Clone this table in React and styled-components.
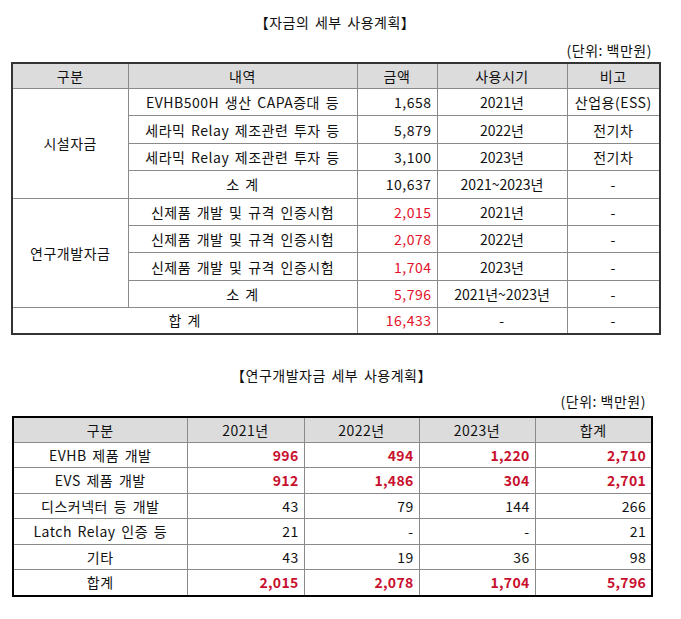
import React from "react";
import styled, { createGlobalStyle } from "styled-components";

const GlobalStyle = createGlobalStyle`
  body {
    margin: 0;
    background: #fff;
    font-family: "Noto Sans CJK KR", "DejaVu Sans", sans-serif;
    color: #111;
  }
`;

const Page = styled.div`
  width: 681px;
  height: 619px;
  padding-top: 12px;
  box-sizing: border-box;
`;

const Section = styled.section`
  margin-left: ${(props) => props.left}px;
  width: ${(props) => props.width}px;
  margin-bottom: ${(props) => props.gap || 0}px;
`;

const Title = styled.div`
  text-align: center;
  font-size: 14px;
  line-height: 20px;
  letter-spacing: 0.5px;
  word-spacing: 2px;
`;

const Unit = styled.div`
  text-align: right;
  font-size: 14px;
  line-height: 20px;
  margin-top: ${(props) => props.top}px;
  margin-bottom: ${(props) => props.bottom}px;
  padding-right: ${(props) => props.right}px;
  letter-spacing: 0.5px;
`;

const Table = styled.table`
  width: 100%;
  border-collapse: collapse;
  table-layout: fixed;
  border: 2px solid ${(props) => props.edge};
  font-size: 14px;
`;

const Th = styled.th`
  background: #dcdcdc;
  font-weight: 400;
  height: ${(props) => props.h}px;
  padding: 0;
  border: 1px solid #8a8a8a;
  text-align: center;
  letter-spacing: 0.5px;
  line-height: 16px;
`;

const Td = styled.td`
  height: ${(props) => props.h}px;
  padding: 0 ${(props) => (props.align === "right" ? "5px" : "2px")} 0 2px;
  border: 1px solid #8a8a8a;
  text-align: ${(props) => props.align || "center"};
  color: ${(props) => (props.red ? props.redColor || "#e3102a" : "#111")};
  font-weight: ${(props) => (props.bold ? 700 : 400)};
  letter-spacing: ${(props) => props.ls ?? 0.5}px;
  word-spacing: 2px;
  line-height: 16px;
  white-space: nowrap;
`;

const facility = [
  ["EVHB500H 생산 CAPA증대 등", "1,658", "2021년", "산업용(ESS)"],
  ["세라믹 Relay 제조관련 투자 등", "5,879", "2022년", "전기차"],
  ["세라믹 Relay 제조관련 투자 등", "3,100", "2023년", "전기차"],
  ["소 계", "10,637", "2021~2023년", "-"],
];

const research = [
  ["신제품 개발 및 규격 인증시험", "2,015", "2021년", "-"],
  ["신제품 개발 및 규격 인증시험", "2,078", "2022년", "-"],
  ["신제품 개발 및 규격 인증시험", "1,704", "2023년", "-"],
  ["소 계", "5,796", "2021년~2023년", "-"],
];

const detail = [
  ["EVHB 제품 개발", "996", "494", "1,220", "2,710", true],
  ["EVS 제품 개발", "912", "1,486", "304", "2,701", true],
  ["디스커넥터 등 개발", "43", "79", "144", "266", false],
  ["Latch Relay 인증 등", "21", "-", "-", "21", false],
  ["기타", "43", "19", "36", "98", false],
  ["합계", "2,015", "2,078", "1,704", "5,796", true],
];

const RH = 26.4;

export default function App() {
  return (
    <Page>
      <GlobalStyle />
      <Section left={11} width={648} gap={30}>
        <Title>【자금의 세부 사용계획】</Title>
        <Unit top={8} bottom={2} right={7}>(단위: 백만원)</Unit>
        <Table edge="#333">
          <colgroup>
            <col style={{ width: 116 }} />
            <col style={{ width: 229 }} />
            <col style={{ width: 80 }} />
            <col style={{ width: 130 }} />
            <col style={{ width: 93 }} />
          </colgroup>
          <thead>
            <tr>
              <Th h={24}>구분</Th>
              <Th h={24}>내역</Th>
              <Th h={24}>금액</Th>
              <Th h={24}>사용시기</Th>
              <Th h={24}>비고</Th>
            </tr>
          </thead>
          <tbody>
            {facility.map((r, i) => (
              <tr key={"f" + i}>
                {i === 0 && <Td rowSpan={4}>시설자금</Td>}
                <Td h={RH}>{r[0]}</Td>
                <Td h={RH} align="right">{r[1]}</Td>
                <Td h={RH} ls={0}>{r[2]}</Td>
                <Td h={RH}>{r[3]}</Td>
              </tr>
            ))}
            {research.map((r, i) => (
              <tr key={"r" + i}>
                {i === 0 && <Td rowSpan={4}>연구개발자금</Td>}
                <Td h={RH}>{r[0]}</Td>
                <Td h={RH} align="right" red>{r[1]}</Td>
                <Td h={RH} ls={0}>{r[2]}</Td>
                <Td h={RH}>{r[3]}</Td>
              </tr>
            ))}
            <tr>
              <Td h={24.5} colSpan={2}>합 계</Td>
              <Td h={24.5} align="right" red>16,433</Td>
              <Td h={24.5}>-</Td>
              <Td h={24.5}>-</Td>
            </tr>
          </tbody>
        </Table>
      </Section>
      <Section left={12} width={639}>
        <Title>【연구개발자금 세부 사용계획】</Title>
        <Unit top={6} bottom={5} right={5}>(단위: 백만원)</Unit>
        <Table edge="#000">
          <colgroup>
            <col style={{ width: 174 }} />
            <col style={{ width: 117 }} />
            <col style={{ width: 115 }} />
            <col style={{ width: 116 }} />
            <col style={{ width: 117 }} />
          </colgroup>
          <thead>
            <tr>
              <Th h={24}>구분</Th>
              <Th h={24}>2021년</Th>
              <Th h={24}>2022년</Th>
              <Th h={24}>2023년</Th>
              <Th h={24}>합계</Th>
            </tr>
          </thead>
          <tbody>
            {detail.map((r, i) => (
              <tr key={"d" + i}>
                <Td h={24.5}>{r[0]}</Td>
                {r.slice(1, 5).map((v, j) => (
                  <Td
                    key={j}
                    h={24.5}
                    align="right"
                    red={r[5]}
                    bold={r[5]}
                    redColor="#c8102e"
                    ls={0.3}
                  >
                    {v}
                  </Td>
                ))}
              </tr>
            ))}
          </tbody>
        </Table>
      </Section>
    </Page>
  );
}
